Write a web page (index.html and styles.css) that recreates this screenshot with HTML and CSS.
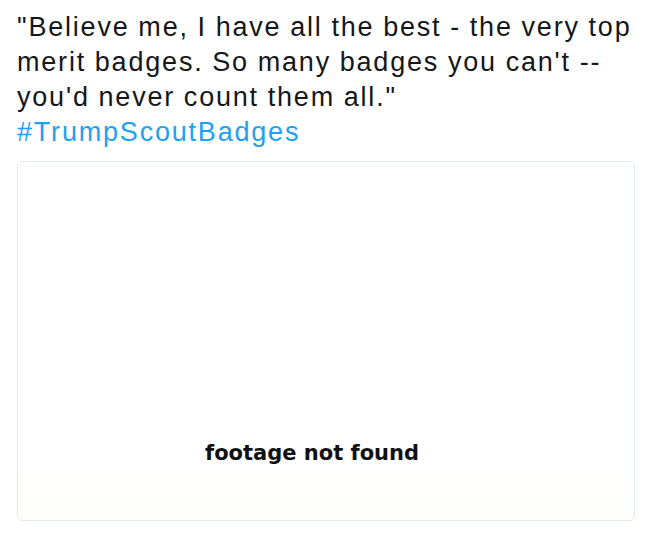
FILE: index.html
```html
<!DOCTYPE html>
<html>
<head>
<meta charset="utf-8">
<link rel="stylesheet" href="styles.css">
</head>
<body>
<div class="tweet">
  <p class="tweet-text">"Believe me, I have all the best - the very top merit badges. So many badges you can't -- you'd never count them all."<br><a class="hashtag" href="#">#TrumpScoutBadges</a></p>
  <div class="media">
    <div class="frame">
      <span class="caption">footage not found</span>
    </div>
  </div>
</div>
</body>
</html>
```
FILE: styles.css
```css
html, body {
  margin: 0;
  padding: 0;
  background: #ffffff;
}
.tweet {
  padding: 10px 17px 0 17px;
  width: 618px;
}
.tweet-text {
  margin: 0;
  font-family: "Liberation Sans", Arial, sans-serif;
  font-size: 27px;
  line-height: 35px;
  letter-spacing: 1.8px;
  word-spacing: -0.5px;
  color: #14171a;
  width: 620px;
}
.hashtag {
  color: #1da1f2;
  text-decoration: none;
}
.media {
  margin-top: 11px;
  width: 618px;
  height: 360px;
  box-sizing: border-box;
  border: 1px solid #e1e8ed;
  border-radius: 5px;
  overflow: hidden;
  background: #ffffff;
}
.frame {
  height: 100%;
  box-sizing: border-box;
  padding: 279px 0 0 187px;
  background: linear-gradient(to bottom, #ffffff 85%, #fefefb 100%);
}
.caption {
  font-family: "DejaVu Sans", Verdana, sans-serif;
  font-weight: bold;
  font-size: 21px;
  color: #111111;
}
```
